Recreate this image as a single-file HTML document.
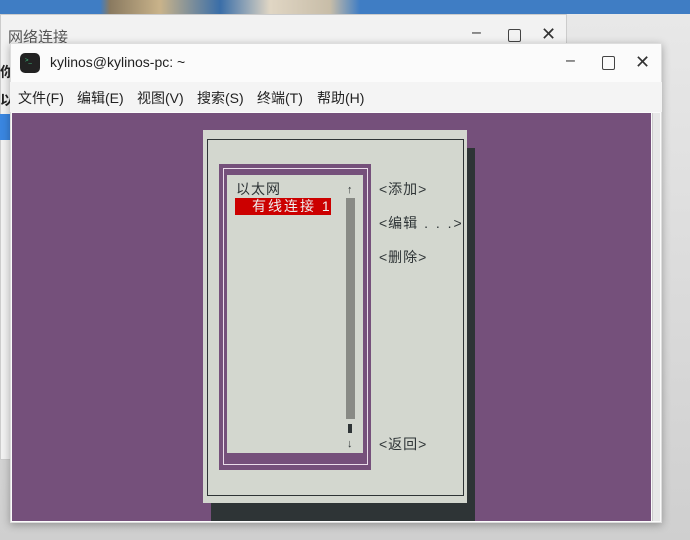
<!DOCTYPE html><html><head><style>
body{margin:0;width:690px;height:540px;overflow:hidden;position:relative;background:#d4d4d4;font-family:"Liberation Sans","Noto Sans CJK SC",sans-serif}
div{position:absolute;box-sizing:border-box}
.t{font-family:"Liberation Sans","Noto Sans CJK SC",sans-serif;font-size:14px;letter-spacing:1px;color:#2e3436;white-space:pre;line-height:17px}
</style></head><body>
<div style="left:0;top:0;width:690px;height:14px;background:linear-gradient(90deg,#3f7dc4 0,#3f7dc4 100px,#8a7a60 110px,#c9b38a 160px,#3a6ea8 220px,#e0d6c4 270px,#c8bda8 330px,#3f7dc4 360px,#3f7dc4 100%)"></div>
<div style="left:0;top:14px;width:690px;height:526px;background:linear-gradient(180deg,#e8e8e8,#cfcfcf)"></div>
<div style="left:0;top:14px;width:567px;height:446px;background:#f2f2f2;border:1px solid #ccc"></div>
<div style="left:8px;top:26px;font-size:15px;color:#555">网络连接</div>
<div style="left:472px;top:24px;font-size:16px;color:#333">–</div>
<div style="left:508px;top:29px;width:13px;height:13px;border:1.5px solid #444;border-radius:2px"></div>
<div style="left:541px;top:24px;font-size:18px;color:#333">✕</div>
<div style="left:0;top:62px;font-size:14px;font-weight:bold;color:#222">你</div>
<div style="left:0;top:90px;font-size:14px;font-weight:bold;color:#222">以</div>
<div style="left:0;top:114px;width:10px;height:26px;background:#3a86e0"></div>
<div style="left:10px;top:43px;width:652px;height:480px;background:#fbfbfb;border:1px solid #ddd;box-shadow:0 2px 8px rgba(0,0,0,.3)"></div>
<div style="left:20px;top:53px;width:20px;height:20px;background:#222;border-radius:5px"></div>
<div style="left:25px;top:58px;font-size:6px;color:#4c8">&gt;_</div>
<div style="left:50px;top:54px;font-size:14px;color:#222">kylinos@kylinos-pc: ~</div>
<div style="left:566px;top:52px;font-size:16px;color:#333">–</div>
<div style="left:602px;top:56px;width:13px;height:14px;border:1.5px solid #444;border-radius:2px"></div>
<div style="left:635px;top:52px;font-size:18px;color:#333">✕</div>
<div style="left:10px;top:82px;width:652px;height:30px;background:#f4f4f4"></div>
<div style="left:18px;top:88px;font-size:14px;color:#222">文件(F)</div>
<div style="left:77px;top:88px;font-size:14px;color:#222">编辑(E)</div>
<div style="left:137px;top:88px;font-size:14px;color:#222">视图(V)</div>
<div style="left:197px;top:88px;font-size:14px;color:#222">搜索(S)</div>
<div style="left:257px;top:88px;font-size:14px;color:#222">终端(T)</div>
<div style="left:317px;top:88px;font-size:14px;color:#222">帮助(H)</div>
<div style="left:12px;top:113px;width:639px;height:408px;background:#75507b"></div>
<div style="left:652px;top:113px;width:8px;height:408px;background:#e8e8e8;border-left:1px solid #ccc"></div>
<div style="left:211px;top:148px;width:264px;height:373px;background:#2e3436"></div>
<div style="left:203px;top:130px;width:264px;height:373px;background:#d3d7cf"></div>
<div style="left:207px;top:139px;width:257px;height:357px;border:1px solid #2e3436"></div>
<div style="left:219px;top:164px;width:152px;height:306px;background:#75507b"></div>
<div style="left:223px;top:168px;width:145px;height:297px;border:1px solid #eadcea"></div>
<div style="left:227px;top:175px;width:136px;height:278px;background:#d3d7cf"></div>
<div style="left:346px;top:198px;width:9px;height:221px;background:#888a85"></div>
<div style="left:348px;top:424px;width:4px;height:9px;background:#2e3436"></div>
<div class="t" style="left:347px;top:182px;font-size:11px">↑</div>
<div class="t" style="left:347px;top:436px;font-size:11px">↓</div>
<div class="t" style="left:236px;top:181px">以太网</div>
<div style="left:235px;top:198px;width:96px;height:17px;background:#cc0000"></div>
<div class="t" style="left:252px;top:198px;color:#eee;letter-spacing:2px">有线连接 1</div>
<div class="t" style="left:379px;top:181px">&lt;添加&gt;</div>
<div class="t" style="left:379px;top:215px">&lt;编辑<span style="letter-spacing:2px"> . . .</span>&gt;</div>
<div class="t" style="left:379px;top:249px">&lt;删除&gt;</div>
<div class="t" style="left:379px;top:436px">&lt;返回&gt;</div>
</body></html>
